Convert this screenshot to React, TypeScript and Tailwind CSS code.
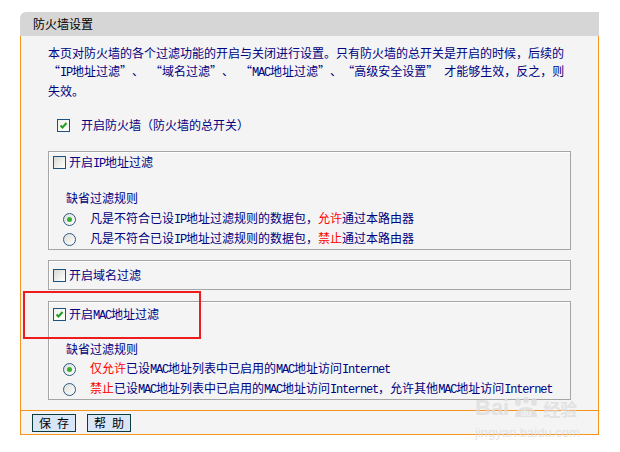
import React from "react";

const L = ({ children }: { children: React.ReactNode }) => (
  <span className="font-['Liberation_Mono',monospace] text-[12px] tracking-[-1.2px]">{children}</span>
);

const QL = () => <span className="inline-block w-[12px] text-right">“</span>;
const QR = () => <span className="inline-block w-[12px] text-left">”</span>;
const Sp = () => <span className="inline-block w-[6px]" />;

const Red = ({ children }: { children: React.ReactNode }) => (
  <span className="text-[#ff0000]">{children}</span>
);

const Checkbox = ({ checked }: { checked?: boolean }) => (
  <span
    className={
      "inline-flex items-center justify-center w-[13px] h-[13px] shrink-0 border border-[#1c5180] " +
      (checked ? "bg-linear-to-br from-[#f0f0ea] to-white" : "bg-linear-to-br from-[#d8d8d2] to-white")
    }
  >
    {checked && (
      <svg width="11" height="11" viewBox="0 0 11 11">
        <path d="M2.5 5.5 L4.5 7.5 L8.5 3" fill="none" stroke="#21a121" strokeWidth="2" />
      </svg>
    )}
  </span>
);

const Radio = ({ checked }: { checked?: boolean }) => (
  <span className="inline-flex items-center justify-center w-[13px] h-[13px] shrink-0 rounded-full border border-[#2c5a85] bg-linear-to-br from-[#dcdcd6] to-white">
    {checked && <span className="w-[5px] h-[5px] rounded-full bg-[#35b035]" />}
  </span>
);

const RadioRow = ({ checked, children }: { checked?: boolean; children: React.ReactNode }) => (
  <div className="flex items-center h-[20px] pl-[10px] whitespace-nowrap">
    <Radio checked={checked} />
    <span className="ml-[14px]">{children}</span>
  </div>
);

export default function App() {
  return (
    <div className="relative w-[620px] h-[452px] bg-white pt-[12px] pl-[20px] font-['Noto_Sans_CJK_SC','Noto_Sans_CJK_JP',sans-serif] text-[12px] text-[#000080]">
      <div className="w-[579px]">
        <div className="h-[24px] bg-[#d6d6d6] rounded-tl-[6px] pl-[13px] flex items-center text-black text-[12px]">
          防火墙设置
        </div>
        <div className="border-x border-b border-[#f7941d] bg-[#f4f4f4]">
          <div className="pl-[27px] pt-[8px]">
            <div className="leading-[18px] whitespace-nowrap">
              <div>本页对防火墙的各个过滤功能的开启与关闭进行设置。只有防火墙的总开关是开启的时候，后续的</div>
              <div>
                <QL /><L>IP</L>地址过滤<QR />、<Sp /><QL />域名过滤<QR />、<Sp /><QL /><L>MAC</L>地址过滤<QR />、<QL />高级安全设置<QR /><Sp />才能够生效，反之，则
              </div>
              <div>失效。</div>
            </div>
            <div className="flex items-center h-[18px] mt-[16px] ml-[9px]">
              <Checkbox checked />
              <span className="ml-[11px]">开启防火墙（防火墙的总开关）</span>
            </div>

            {/* IP filter */}
            <div className="mt-[17px] w-[523px] h-[99px] border border-[#a5a5a5] shadow-[inset_1px_1px_0_#ffffff] pl-[4px] pt-[4px]">
              <div className="flex items-center h-[13px]">
                <Checkbox />
                <span className="ml-[3px]">
                  开启<L>IP</L>地址过滤
                </span>
              </div>
              <div className="pl-[13px] mt-[20px] leading-[18px]">缺省过滤规则</div>
              <div className="mt-[2px]">
                <RadioRow checked>
                  凡是不符合已设<L>IP</L>地址过滤规则的数据包，<Red>允许</Red>通过本路由器
                </RadioRow>
                <RadioRow>
                  凡是不符合已设<L>IP</L>地址过滤规则的数据包，<Red>禁止</Red>通过本路由器
                </RadioRow>
              </div>
            </div>

            {/* Domain filter */}
            <div className="mt-[10px] w-[523px] h-[30px] border border-[#a5a5a5] shadow-[inset_1px_1px_0_#ffffff] pl-[4px] flex items-center">
              <Checkbox />
              <span className="ml-[3px]">开启域名过滤</span>
            </div>

            {/* MAC filter */}
            <div className="mt-[11px] w-[523px] h-[99px] border border-[#a5a5a5] shadow-[inset_1px_1px_0_#ffffff] pl-[4px] pt-[6px]">
              <div className="flex items-center h-[13px]">
                <Checkbox checked />
                <span className="ml-[3px]">
                  开启<L>MAC</L>地址过滤
                </span>
              </div>
              <div className="pl-[13px] mt-[19px] leading-[18px]">缺省过滤规则</div>
              <div className="mt-[1px]">
                <RadioRow checked>
                  <Red>仅允许</Red>已设<L>MAC</L>地址列表中已启用的<L>MAC</L>地址访问<L>Internet</L>
                </RadioRow>
                <RadioRow>
                  <Red>禁止</Red>已设<L>MAC</L>地址列表中已启用的<L>MAC</L>地址访问<L>Internet</L>，允许其他<L>MAC</L>地址访问<L>Internet</L>
                </RadioRow>
              </div>
            </div>
          </div>

          <div className="mt-[10px] border-t border-[#f7941d] pl-[11px] pt-[3px] pb-[2px] flex gap-[11px]">
            <button className="w-[44px] h-[18px] border border-[#0e3b3b] bg-[#d8e6f8] text-black text-[12px] leading-[16px] tracking-[6px] pl-[6px]">
              保存
            </button>
            <button className="w-[44px] h-[18px] border border-[#0e3b3b] bg-[#d8e6f8] text-black text-[12px] leading-[16px] tracking-[6px] pl-[6px]">
              帮助
            </button>
          </div>
        </div>
      </div>

      {/* red highlight */}
      <div className="absolute left-[23px] top-[291px] w-[178px] h-[48px] border-2 border-[#ee1c1c]" />

      {/* watermark */}
      <div className="absolute left-[475px] top-[395px] w-[112px] text-[#dcdcdc] opacity-75 pointer-events-none">
        <div className="flex items-end h-[24px]">
          <span className="font-['Liberation_Sans',sans-serif] font-bold text-[22px] leading-[22px]">Bai</span>
          <svg width="32" height="22" viewBox="0 0 32 22" className="mx-[1px]">
            <ellipse cx="8" cy="5" rx="3" ry="4" fill="#dcdcdc" />
            <ellipse cx="16" cy="3" rx="3" ry="3.5" fill="#dcdcdc" />
            <ellipse cx="24" cy="5" rx="3" ry="4" fill="#dcdcdc" />
            <path d="M5 20 C5 13 11 10 16 10 C21 10 27 13 27 20 Z" fill="#dcdcdc" />
            <text x="16" y="19" textAnchor="middle" fontSize="9" fontFamily="Liberation Sans" fontWeight="bold" fill="#f4f4f4">du</text>
          </svg>
          <span className="text-[17px] leading-[20px] font-bold">经验</span>
        </div>
        <div className="font-['Liberation_Sans',sans-serif] text-[13px] leading-[14px] mt-[7px]">jingyan.baidu.com</div>
      </div>
    </div>
  );
}
